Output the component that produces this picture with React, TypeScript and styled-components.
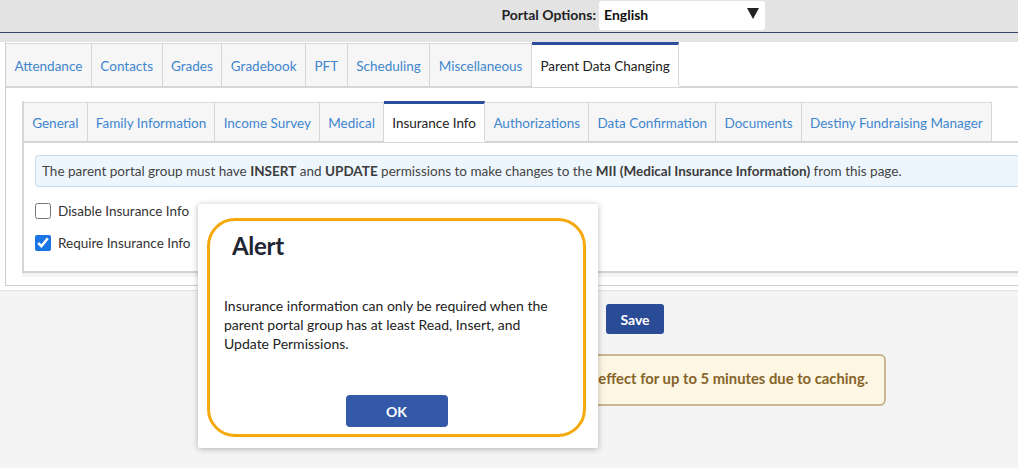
import styled, { createGlobalStyle } from 'styled-components'

const GlobalStyle = createGlobalStyle`
    html, body {
        margin: 0;
        padding: 0;
        background: #f4f4f4;
        font-family: Lato, "Open Sans", Arial, sans-serif;
    }
`

const Page = styled.div`
    position: relative;
    width: 100%;
    height: 468px;
    overflow: hidden;
    background: #f4f4f4;
`

const TopBar = styled.div`
    height: 33px;
    box-sizing: border-box;
    padding: 1px 253px 0 0;
    background: #e3e3e3;
    border-bottom: 1px solid #34476b;
    display: flex;
    align-items: flex-start;
    justify-content: flex-end;
    gap: 3px;
`

const TopBand = styled.div`
    height: 9px;
    background: #e3e3e3;
`

const PortalLabel = styled.label`
    font-size: 14px;
    line-height: 27px;
    font-weight: 700;
    color: #222;
`

const LangSelect = styled.div`
    width: 166px;
    height: 29px;
    box-sizing: border-box;
    background: #fff;
    border-radius: 3px;
    display: flex;
    align-items: center;
    justify-content: space-between;
    padding: 0 6px 2px 5px;
    font-size: 14px;
    font-weight: 700;
    color: #111;
`

const Caret = styled.span`
    width: 0;
    height: 0;
    border-left: 6px solid transparent;
    border-right: 6px solid transparent;
    border-top: 11px solid #222;
    margin-bottom: 3px;
`

const OuterWrap = styled.div`
    background: #fff;
    padding: 0 0 4px 5px;
    border-bottom: 1px solid #e2e2e2;
`

const OuterPanel = styled.div`
    margin-right: -20px;
    border-left: 1px solid #cfcfcf;
    border-bottom: 1px solid #cfcfcf;
    background: #fff;
`

const TabRow = styled.div`
    display: flex;
    border-bottom: 2px solid #d6d6d6;
`

const Tab = styled.div<{ $active?: boolean; $h: number; $pad: number }>`
    height: ${(p) => p.$h}px;
    box-sizing: border-box;
    display: flex;
    align-items: center;
    padding: 1px ${(p) => p.$pad}px 0;
    margin-bottom: -2px;
    font-size: 13.5px;
    white-space: nowrap;
    background: ${(p) => (p.$active ? '#fff' : '#f6f6f6')};
    color: ${(p) => (p.$active ? '#222' : '#3f86cf')};
    border-top: ${(p) => (p.$active ? '3px solid #2c4d9c' : '1px solid #dadada')};
    border-right: 1px solid #d6d6d6;
    border-bottom: 2px solid ${(p) => (p.$active ? '#fff' : '#d6d6d6')};
    margin-top: ${(p) => (p.$active ? '0' : '1px')};
`

const OuterBody = styled.div`
    padding: 13px 0 12px 16px;
`

const InnerPanel = styled.div`
    margin-right: -40px;
    border-left: 2px solid #d6d6d6;
    border-bottom: 2px solid #d2d2d2;
    box-shadow: 0 4px 0 #f4f4f4;
`

const InnerContent = styled.div`
    padding: 12px 0 16px 11px;
    display: flex;
    flex-direction: column;
`

const Banner = styled.div`
    height: 32px;
    box-sizing: border-box;
    display: flex;
    align-items: center;
    padding: 0 6px;
    background: #eef6fd;
    border: 1px solid #c9dcec;
    border-right: none;
    border-radius: 4px 0 0 4px;
    font-size: 13.5px;
    color: #444;
    white-space: nowrap;
    margin-bottom: 12px;

    b {
        color: #3c3c3c;
    }
`

const CheckRow = styled.label`
    height: 24px;
    display: flex;
    align-items: center;
    gap: 7px;
    font-size: 13.5px;
    color: #333;
    margin-bottom: 8px;

    &:last-child {
        margin-bottom: 0;
    }
`

const Check = styled.input`
    width: 16px;
    height: 16px;
    margin: 0;
    accent-color: #1b74e4;
`

const Footer = styled.div`
    padding: 13px 0 0 252px;
    display: flex;
    flex-direction: column;
    align-items: center;
    gap: 20px;
`

const SaveButton = styled.button`
    width: 58px;
    height: 30px;
    border: none;
    border-radius: 3px;
    background: #2a4b96;
    color: #fff;
    font-family: inherit;
    font-size: 14px;
    font-weight: 700;
`

const Note = styled.div`
    box-sizing: border-box;
    height: 52px;
    padding: 13px 16px 0;
    background: #fdf6e2;
    border: 2px solid #c8b68e;
    border-radius: 6px;
    font-size: 14.8px;
    font-weight: 700;
    color: #86642a;
    white-space: nowrap;
`

const Modal = styled.div`
    position: absolute;
    left: 198px;
    top: 204px;
    width: 400px;
    height: 244px;
    box-sizing: border-box;
    padding: 14px 12px 11px 9px;
    background: #fff;
    border-radius: 2px;
    box-shadow: 0 1px 6px rgba(0, 0, 0, 0.28);
`

const Frame = styled.div`
    height: 100%;
    box-sizing: border-box;
    border: 3px solid #f6a90c;
    border-radius: 28px;
    display: flex;
    flex-direction: column;
    padding: 10px 14px 7px;
`

const AlertTitle = styled.h2`
    margin: 0 0 0 8px;
    font-size: 24px;
    line-height: 30px;
    font-weight: 700;
    color: #1e2533;
    letter-spacing: -0.3px;
`

const AlertText = styled.p`
    width: 335px;
    margin: 35px 0 0;
    font-size: 14px;
    line-height: 19px;
    color: #222;
`

const OkButton = styled.button`
    margin: auto auto 0;
    width: 102px;
    height: 32px;
    border: none;
    border-radius: 4px;
    background: #3359a8;
    color: #fff;
    font-family: inherit;
    font-size: 14px;
    font-weight: 700;
`

const outerTabs = ['Attendance', 'Contacts', 'Grades', 'Gradebook', 'PFT', 'Scheduling', 'Miscellaneous', 'Parent Data Changing']
const innerTabs = ['General', 'Family Information', 'Income Survey', 'Medical', 'Insurance Info', 'Authorizations', 'Data Confirmation', 'Documents', 'Destiny Fundraising Manager']

export default function App() {
    return (
        <Page>
            <GlobalStyle />
            <TopBar>
                <PortalLabel>Portal Options:</PortalLabel>
                <LangSelect>
                    English
                    <Caret />
                </LangSelect>
            </TopBar>
            <TopBand />
            <OuterWrap>
                <OuterPanel>
                    <TabRow>
                        {outerTabs.map((t) => (
                            <Tab key={t} $h={45} $pad={8.5} $active={t === 'Parent Data Changing'}>{t}</Tab>
                        ))}
                    </TabRow>
                    <OuterBody>
                        <InnerPanel>
                            <TabRow>
                                {innerTabs.map((t) => (
                                    <Tab key={t} $h={41} $pad={8.2} $active={t === 'Insurance Info'}>{t}</Tab>
                                ))}
                            </TabRow>
                            <InnerContent>
                                <Banner>
                                    The parent portal group must have&nbsp;<b>INSERT</b>&nbsp;and&nbsp;<b>UPDATE</b>&nbsp;permissions to make changes to the&nbsp;<b>MII (Medical Insurance Information)</b>&nbsp;from this page.
                                </Banner>
                                <CheckRow>
                                    <Check type="checkbox" />
                                    Disable Insurance Info
                                </CheckRow>
                                <CheckRow>
                                    <Check type="checkbox" defaultChecked />
                                    Require Insurance Info
                                </CheckRow>
                            </InnerContent>
                        </InnerPanel>
                    </OuterBody>
                </OuterPanel>
            </OuterWrap>
            <Footer>
                <SaveButton>Save</SaveButton>
                <Note>Some changes might not take effect for up to 5 minutes due to caching.</Note>
            </Footer>
            <Modal>
                <Frame>
                    <AlertTitle>Alert</AlertTitle>
                    <AlertText>
                        Insurance information can only be required when the parent portal group has at least Read, Insert, and Update Permissions.
                    </AlertText>
                    <OkButton>OK</OkButton>
                </Frame>
            </Modal>
        </Page>
    )
}
